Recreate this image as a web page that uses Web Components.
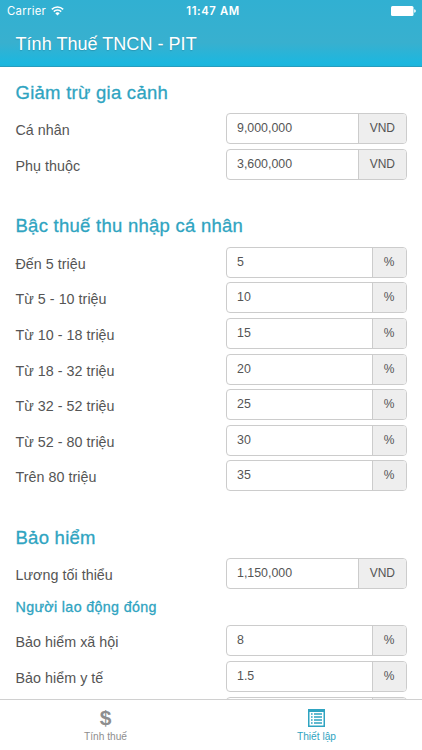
<!DOCTYPE html>
<html lang="vi">
<head>
<meta charset="utf-8">
<meta name="viewport" content="width=device-width, initial-scale=1">
<title>Tính Thuế TNCN - PIT</title>
<style>
  html, body {
    margin: 0;
    height: 100%;
    overflow: hidden;
    background: #fff;
    font-family: "Liberation Sans", Arial, sans-serif;
  }
</style>
</head>
<body>
<pit-app>
  <pit-header slot="header" carrier="Carrier" time="11:47 AM">Tính Thuế TNCN - PIT</pit-header>

  <pit-section heading="Giảm trừ gia cảnh">
    <pit-field value="9,000,000" unit="VND">Cá nhân</pit-field>
    <pit-field value="3,600,000" unit="VND">Phụ thuộc</pit-field>
  </pit-section>

  <pit-section heading="Bậc thuế thu nhập cá nhân">
    <pit-field value="5" unit="%">Đến 5 triệu</pit-field>
    <pit-field value="10" unit="%">Từ 5 - 10 triệu</pit-field>
    <pit-field value="15" unit="%">Từ 10 - 18 triệu</pit-field>
    <pit-field value="20" unit="%">Từ 18 - 32 triệu</pit-field>
    <pit-field value="25" unit="%">Từ 32 - 52 triệu</pit-field>
    <pit-field value="30" unit="%">Từ 52 - 80 triệu</pit-field>
    <pit-field value="35" unit="%">Trên 80 triệu</pit-field>
  </pit-section>

  <pit-section heading="Bảo hiểm">
    <pit-field value="1,150,000" unit="VND">Lương tối thiểu</pit-field>
    <pit-subheading>Người lao động đóng</pit-subheading>
    <pit-field value="8" unit="%">Bảo hiểm xã hội</pit-field>
    <pit-field value="1.5" unit="%">Bảo hiểm y tế</pit-field>
    <pit-field value="" unit="%"></pit-field>
  </pit-section>

  <pit-tabs slot="tabs">
    <pit-tab>
      <span slot="icon">$</span>
      Tính thuế
    </pit-tab>
    <pit-tab active>
      <svg slot="icon" width="17" height="18" viewBox="0 0 17 18">
        <path fill="currentColor" fill-rule="evenodd" d="M0 0h17v18H0zM1.5 3v13.5h14V3z"/>
        <path fill="currentColor" d="M3 4.3h1.6v1.5H3zM3 7.3h1.6v1.5H3zM3 10.3h1.6v1.5H3zM3 13.3h1.6v1.5H3zM6 4.3h8v1.5H6zM6 7.3h8v1.5H6zM6 10.3h8v1.5H6zM6 13.3h8v1.5H6z"/>
      </svg>
      Thiết lập
    </pit-tab>
  </pit-tabs>
</pit-app>

<script>
class PitApp extends HTMLElement {
    constructor() {
        super();
        this.attachShadow({mode: 'open'}).innerHTML = `
            <style>
              :host {
                display: flex;
                flex-direction: column;
                height: 100vh;
                overflow: hidden;
              }
              main {
                flex: 1;
                min-height: 0;
                overflow: hidden;
                padding: 0 15.5px;
              }
            </style>
            <slot name="header"></slot>
            <main><slot></slot></main>
            <slot name="tabs"></slot>
        `;
    }
}

class PitHeader extends HTMLElement {
    connectedCallback() {
        this.attachShadow({mode: 'open'}).innerHTML = `
            <style>
              :host {
                display: block;
                flex: none;
                box-sizing: border-box;
                height: 67px;
                color: #fff;
                background: linear-gradient(#31b0d2 0, #38b0cf 43px, #1cb7df 63px, #1cb5dc 100%);
                border-bottom: 1px solid #269dbe;
              }
              .status {
                display: grid;
                grid-template-columns: 1fr auto 1fr;
                align-items: center;
                height: 22px;
                padding: 0 6px 0 7px;
                font: 11.3px/22px Inter, sans-serif;
              }
              .carrier {
                display: flex;
                align-items: center;
                gap: 5px;
                letter-spacing: 0.3px;
              }
              .time {
                padding-left: 3px;
                font-weight: 600;
                letter-spacing: 0.6px;
              }
              .battery {
                justify-self: end;
              }
              svg {
                display: block;
              }
              h1 {
                margin: 0;
                padding-left: 15.5px;
                font-size: 18px;
                font-weight: 400;
                letter-spacing: 0.04px;
                line-height: 44px;
                text-shadow: 0 1px 1px rgba(0, 0, 0, 0.15);
              }
            </style>
            <div class="status">
              <div class="carrier">
                <span>${this.getAttribute('carrier')}</span>
                <svg width="13" height="10" viewBox="0 0 13 10" fill="none" stroke="#fff" stroke-width="1.5">
                  <path d="M.8 3.4a8.2 8.2 0 0 1 11.4 0M2.8 5.6a5.3 5.3 0 0 1 7.4 0"/>
                  <path fill="#fff" stroke="none" d="M4.3 7.2a3.2 3.2 0 0 1 4.4 0L6.5 9.6z"/>
                </svg>
              </div>
              <div class="time">${this.getAttribute('time')}</div>
              <svg class="battery" width="25" height="10" viewBox="0 0 25 10" fill="#fff">
                <rect width="22.5" height="10" rx="1.5"/>
                <path d="M23.2 3.2q1.6.3 1.6 1.8t-1.6 1.8z"/>
              </svg>
            </div>
            <h1><slot></slot></h1>
        `;
    }
}

class PitSection extends HTMLElement {
    connectedCallback() {
        this.attachShadow({mode: 'open'}).innerHTML = `
            <style>
              :host {
                display: block;
                padding-bottom: 16px;
              }
              h2 {
                margin: 0;
                height: 46.3px;
                box-sizing: border-box;
                padding-top: 14px;
                color: #2fa4c1;
                font-size: 18.5px;
                font-weight: 400;
                letter-spacing: 0.26px;
                line-height: 24px;
                -webkit-text-stroke: 0.3px #2fa4c1;
              }
            </style>
            <h2>${this.getAttribute('heading')}</h2>
            <slot></slot>
        `;
    }
}

class PitSubheading extends HTMLElement {
    constructor() {
        super();
        this.attachShadow({mode: 'open'}).innerHTML = `
            <style>
              :host {
                display: block;
                height: 31.6px;
                color: #2fa4c1;
                font-size: 14.3px;
                letter-spacing: 0.33px;
                line-height: 27px;
                -webkit-text-stroke: 0.3px #2fa4c1;
              }
            </style>
            <slot></slot>
        `;
    }
}

class PitField extends HTMLElement {
    connectedCallback() {
        this.attachShadow({mode: 'open'}).innerHTML = `
            <style>
              :host {
                display: grid;
                grid-template-columns: 1fr 180.5px;
                height: 35.6px;
                color: #555;
              }
              label {
                font-size: 14.3px;
                letter-spacing: 0.03px;
                line-height: 34px;
              }
              .group {
                display: flex;
                box-sizing: border-box;
                height: 31px;
                border: 1px solid #ccc;
                border-radius: 4px;
                overflow: hidden;
                font-size: 12.4px;
                line-height: 29px;
              }
              .value {
                flex: 1;
                padding-left: 10px;
              }
              .unit {
                min-width: 12px;
                padding: 0 10.5px;
                background: #eee;
                border-left: 1px solid #ccc;
                font-size: 12px;
                text-align: center;
              }
            </style>
            <label><slot></slot></label>
            <div class="group">
              <div class="value">${this.getAttribute('value')}</div>
              <div class="unit">${this.getAttribute('unit')}</div>
            </div>
        `;
    }
}

class PitTabs extends HTMLElement {
    constructor() {
        super();
        this.attachShadow({mode: 'open'}).innerHTML = `
            <style>
              :host {
                display: flex;
                flex: none;
                box-sizing: border-box;
                height: 51px;
                background: #fff;
                border-top: 1px solid #d0d0d0;
              }
            </style>
            <slot></slot>
        `;
    }
}

class PitTab extends HTMLElement {
    constructor() {
        super();
        this.attachShadow({mode: 'open'}).innerHTML = `
            <style>
              :host {
                flex: 1;
                display: flex;
                flex-direction: column;
                align-items: center;
                color: #8e8e8e;
                font-size: 10.2px;
                line-height: 14px;
              }
              :host([active]) {
                color: #2fa4c1;
              }
              .icon {
                display: flex;
                align-items: center;
                height: 20px;
                margin: 8px 0 2px;
                font-size: 21px;
                font-weight: 700;
              }
            </style>
            <div class="icon"><slot name="icon"></slot></div>
            <div><slot></slot></div>
        `;
    }
}

customElements.define('pit-app', PitApp);
customElements.define('pit-header', PitHeader);
customElements.define('pit-section', PitSection);
customElements.define('pit-subheading', PitSubheading);
customElements.define('pit-field', PitField);
customElements.define('pit-tabs', PitTabs);
customElements.define('pit-tab', PitTab);
</script>
</body>
</html>
